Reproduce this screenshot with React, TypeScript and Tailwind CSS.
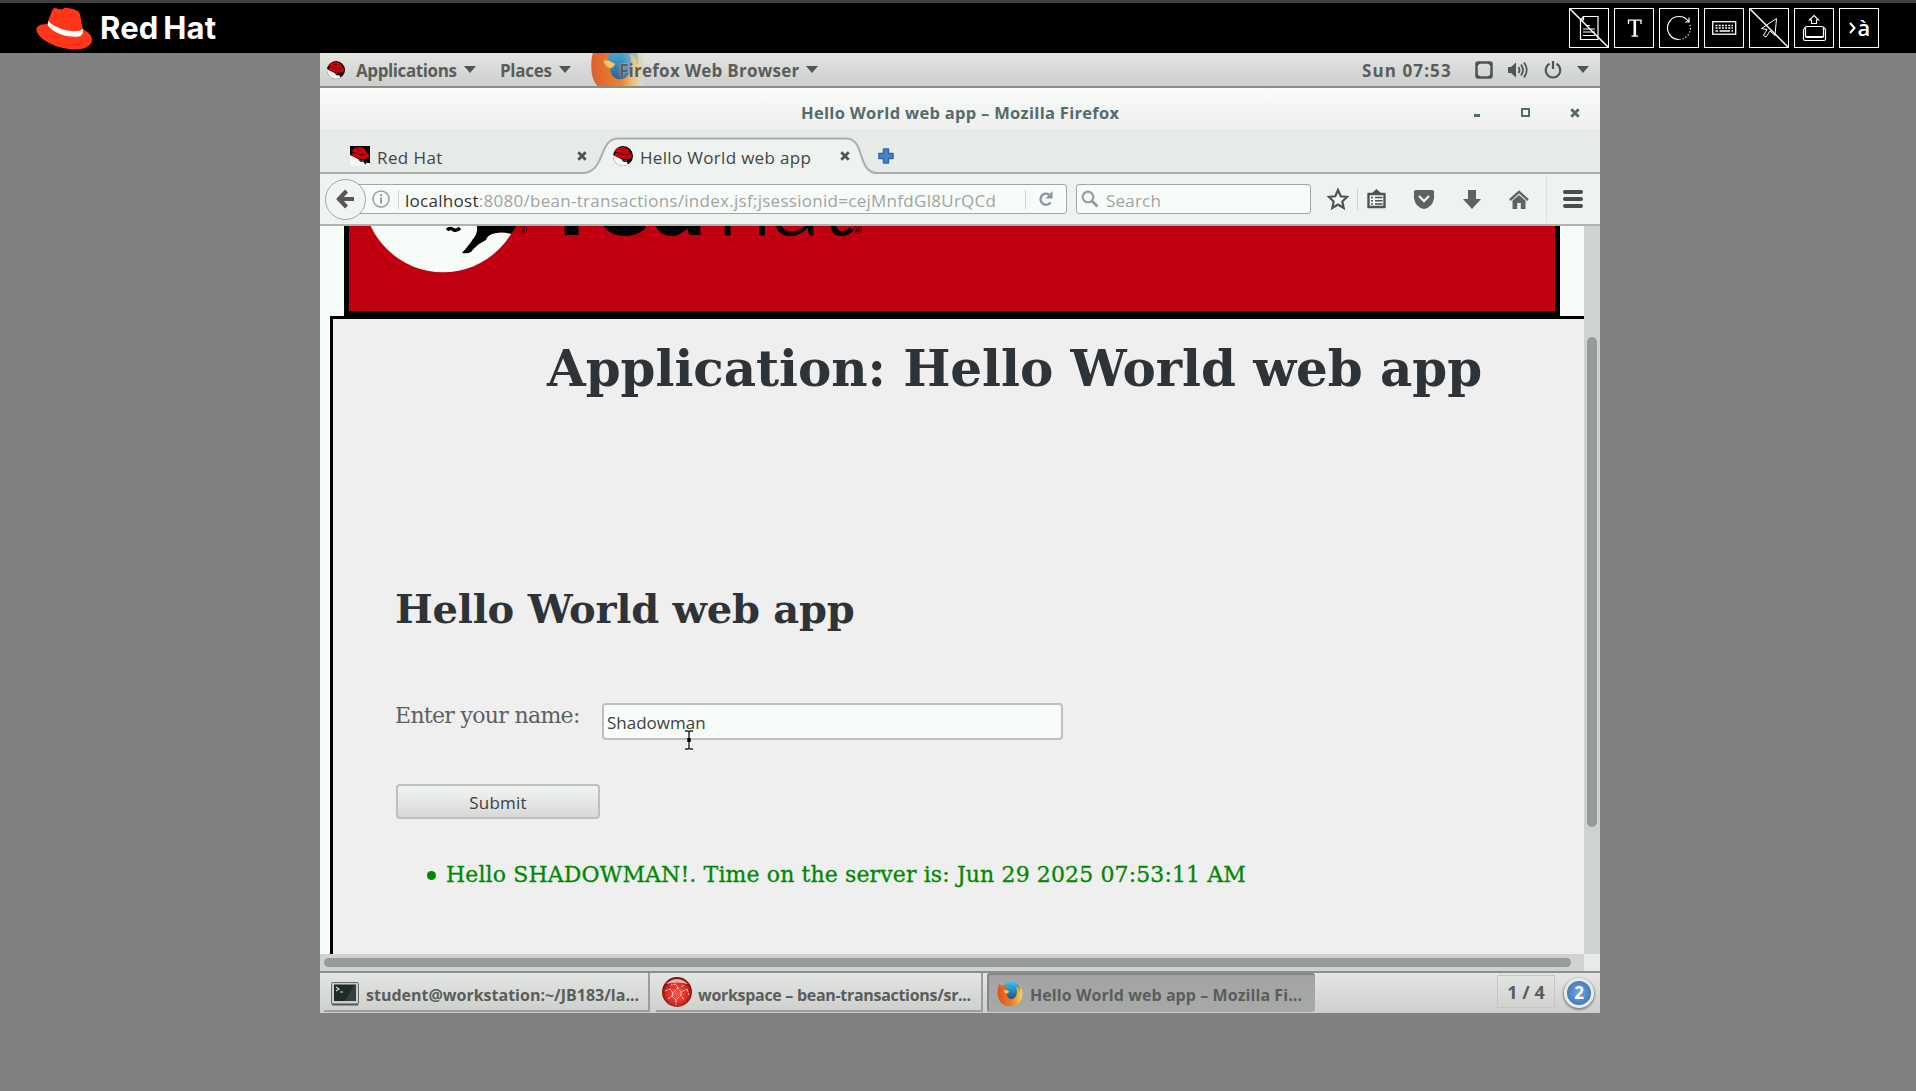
import React from "react";

const RedHatLogo = () => (
  <svg width="58" height="44" viewBox="0 0 58 44" className="block shrink-0">
    <path d="M11 17C3 17 0 20 .4 23C2 32 18 41 37 42.500C50 43 56 38 56 33C56 28 52 25 47 22Z" fill="#ff3617" />
    <path d="M12 14L16 4Q17 0 21 1.500L26 2.500L29 .5Q36 1 42 4L44 7L47 23Q44 30 32 28Q18 26 12 19Z" fill="#ff3617" />
    <path d="M12.500 14Q11 16 12 18.500C17 26 31 31 43 29.500Q47.500 28.500 47 22Q42 25.500 31 23.500Q17 20 12.500 14Z" fill="#fff" />
  </svg>
);

const Shadowman = ({ size, round = false }: { size: number; round?: boolean }) => (
  <svg width={size} height={size} viewBox="0 0 20 20" className={round ? "block shrink-0 rounded-full" : "block shrink-0"}>
    <rect width="20" height="20" fill="#000" />
    <path d="M0 9L4 11Q8 13 10 14L16 15L17 17L20 17V20H0Z" fill="#f4f7f4" />
    <path d="M2 5Q4 1 7 1.500Q12 0 15 3L17 7Q20 9 18.500 12Q15 14 9 12.500Q3 11 1 8L4 7Z" fill="#d00010" />
    <path d="M4 6.500Q10 10 16 8.500M7 3Q9 5.500 12 4" stroke="#500" strokeWidth="1" fill="none" />
    <path d="M8 13.500Q12 15 17 14L16 18.500L14.500 17.500L13.500 15.500L11 16Z" fill="#000" />
  </svg>
);

const Firefox = ({ size, id }: { size: number; id: string }) => (
  <svg width={size} height={size} viewBox="0 0 32 32" className="block shrink-0">
    <defs>
      <linearGradient id={id + "b"} x1="0" y1="0" x2="0" y2="1">
        <stop offset="0" stopColor="#3cc0ee" />
        <stop offset="1" stopColor="#14387c" />
      </linearGradient>
      <linearGradient id={id + "o"} x1="0" y1="0" x2="1" y2="0">
        <stop offset="0" stopColor="#e0521c" />
        <stop offset=".6" stopColor="#ee7f22" />
        <stop offset="1" stopColor="#fbd94a" />
      </linearGradient>
    </defs>
    <circle cx="17" cy="14" r="13" fill={"url(#" + id + "b)"} />
    <path d="M3 3Q4 7 7 6Q10 5 12 7Q10 9 11 11L15 13Q14 15 12 15.500Q12 21 17 22Q24 22 24.500 14Q25 10 23 7Q28 8 28 14Q29 9 27 5Q32 10 31 18Q29 30 17 31Q3 31 1 18Q0 9 3 3Z" fill={"url(#" + id + "o)"} />
    <path d="M11 11L15 13Q14 15 12 15.500Q9 15 8 11Z" fill="#f9c35a" />
  </svg>
);

const Caret = ({ className }: { className: string }) => (
  <svg width="12" height="7" viewBox="0 0 12 7" className={"block shrink-0 " + className}>
    <path d="M0 0H12L6 7Z" fill="#505452" />
  </svg>
);

const Cross = ({ color, className = "" }: { color: string; className?: string }) => (
  <svg width="10" height="10" viewBox="0 0 10 10" className={"block shrink-0 " + className}>
    <path d="M1.300 1.300L8.700 8.700M8.700 1.300L1.300 8.700" stroke={color} strokeWidth="2.800" />
  </svg>
);

const ToolButton = ({ slashed = false, children }: { slashed?: boolean; children: React.ReactNode }) => (
  <div className="h-10 w-10 shrink-0 border border-white">
    <svg width="38" height="38" viewBox="1 1 38 38" fill="none" stroke="#fff" className="block">
      {children}
      {slashed && <path d="M0 0L40 40" strokeWidth="1.500" />}
    </svg>
  </div>
);

const Toolbar = () => (
  <div className="flex gap-[5px]">
    <ToolButton slashed>
      <path d="M14.500 8.500H29V31.500H11.500V12Z" strokeWidth="1.200" />
      <path d="M14.500 8.500V12H11.500M17 17.500H21M14 21H26M14 24H26M14 27.500H26" strokeWidth="1.200" />
    </ToolButton>
    <ToolButton>
      <path d="M14.500 16V12.200H27V16M20.800 12V28M17.500 28.200H24" strokeWidth="1.300" />
      <path d="M20.800 12V28" strokeWidth="2.600" />
    </ToolButton>
    <ToolButton>
      <path d="M29.500 13.500A11.500 11.500 0 1 0 20 31.500M30 9.500V14H26" strokeWidth="1.200" />
      <path d="M31 17A11.500 11.500 0 0 1 20 31.500" strokeWidth="1.200" strokeDasharray="1.200 2" />
    </ToolButton>
    <ToolButton>
      <rect x="8.700" y="13.700" width="23" height="12.500" strokeWidth="1.300" />
      <path d="M11.500 17.500H29M11.500 20H29" strokeWidth="1.300" strokeDasharray="2 1.200" />
      <path d="M11.500 23H14M15.500 23H26M27.500 23H29" strokeWidth="1.300" />
    </ToolButton>
    <ToolButton slashed>
      <path d="M27.500 10.500L12.500 20.500L18 21.500L14.500 27.500L17 29L21 23L26 27.500Z" strokeWidth="1" />
    </ToolButton>
    <ToolButton>
      <path d="M20 7.500L24.500 12H22.500V15.500H17.500V12H15.500Z" strokeWidth="1.100" />
      <rect x="11.500" y="18.500" width="18" height="11" rx="1.500" strokeWidth="1.200" />
      <path d="M11.500 28.500H29.500M9.500 21.500V31Q9.500 32.500 11 32.500H30Q31.500 32.500 31.500 31V21.500L29.500 19M9.500 21.500L11.500 19" strokeWidth="1.200" />
    </ToolButton>
    <div className="flex h-10 w-10 items-center justify-center border border-white font-['Open_Sans',sans-serif] text-[22px] font-semibold tracking-[-1px] text-white">
      <svg width="7" height="12" viewBox="0 0 7 12" className="mr-[2px] block" fill="none" stroke="#fff" strokeWidth="2">
        <path d="M1 1L5.500 6L1 11" />
      </svg>
      <span className="pb-0.5">à</span>
    </div>
  </div>
);

const GnomeBar = () => (
  <div className="flex h-[35px] shrink-0 items-center border-b-2 border-[#8a8d8a] bg-linear-to-b from-[#e2e5e2] to-[#cccfcc] text-[17px] font-bold text-[#5a5d5b]">
    <div className="ml-[7px]"><Shadowman size={18} round /></div>
    <span className="ml-[11px] mt-0.5 w-[102px] tracking-[-0.4px]">Applications</span>
    <Caret className="ml-[6px]" />
    <span className="ml-[24px] mt-0.5 w-[52px] tracking-[-0.3px]">Places</span>
    <Caret className="ml-[7px]" />
    <div className="relative ml-[19px] h-[33px] w-[54px] shrink-0 overflow-hidden">
      <div className="absolute -top-[11px] left-0 opacity-90"><Firefox size={54} id="fa" /></div>
      <div className="absolute inset-0 bg-linear-to-r from-transparent from-60% to-[#d6d9d6]/80" />
    </div>
    <span className="relative -ml-[25px] mt-0.5 w-[180px] tracking-[0.25px] [text-shadow:0_0_2px_#ddd]">Firefox Web Browser</span>
    <Caret className="ml-[7px]" />
    <span className="ml-auto mt-0.5 w-[90px] tracking-[1.1px]">Sun 07:53</span>
    <svg width="18" height="18" viewBox="0 0 18 18" className="ml-[23px] block shrink-0">
      <rect x="1.500" y="1.500" width="15" height="15" rx="1.500" fill="none" stroke="#505452" strokeWidth="2.500" />
      <path d="M2 2L5 2L2 5ZM16 2V5L13 2ZM2 16V13L5 16ZM16 16H13L16 13Z" fill="#505452" stroke="#505452" />
    </svg>
    <svg width="20" height="18" viewBox="0 0 20 18" className="ml-[15px] block shrink-0" fill="none" stroke="#505452" strokeWidth="1.800">
      <path d="M0 6H3L8 1.500V16.500L3 12H0Z" fill="#505452" stroke="none" />
      <path d="M10.500 6Q12.500 9 10.500 12M13 3.500Q17 9 13 14.500M16 1.500Q21.500 9 16 16.500" />
    </svg>
    <svg width="18" height="18" viewBox="0 0 18 18" className="ml-4 block shrink-0" fill="none" stroke="#505452" strokeWidth="2.200">
      <path d="M5.500 2.800A7.300 7.300 0 1 0 12.500 2.800M9 0V8" />
    </svg>
    <Caret className="ml-[15px] mr-[11px]" />
  </div>
);

const TitleBar = () => (
  <div className="flex h-[41px] shrink-0 items-center bg-linear-to-b from-[#f9fcf9] to-[#eeefee]">
    <span className="ml-[481px] mt-[9px] w-[324px] text-[16.500px] font-bold tracking-[0.3px] text-[#536b6b]">Hello World web app – Mozilla Firefox</span>
    <span className="ml-auto mt-[14px] block h-[3px] w-[6px] bg-[#536b6b]" />
    <span className="ml-[41px] mt-2 block h-[9px] w-[9px] border-[2.500px] border-[#536b6b]" />
    <Cross color="#536b6b" className="mt-2 ml-10 mr-[20px]" />
  </div>
);

const TabStrip = () => (
  <div className="relative flex h-[45px] shrink-0 items-center border-b-2 border-[#a9aeab] bg-[#e7ebe8] pt-[11px] text-[17px] text-[#414544]">
    <svg width="300" height="37" viewBox="0 0 300 37" className="absolute left-[262px] top-[8px]">
      <path d="M0 37C24 37 16 1.500 36 1.500H264C284 1.500 276 37 294 37Z" fill="#eff3f0" />
      <path d="M0 36C24 36 16 1.500 36 1.500H264C284 1.500 274 36 296 36" fill="none" stroke="#a9aeb3" strokeWidth="2" />
    </svg>
    <div className="ml-[30px]"><Shadowman size={20} /></div>
    <span className="ml-[7px] mt-[3px] w-[200px] tracking-[0.4px]">Red Hat</span>
    <Cross color="#505452" />
    <div className="relative ml-[26px]"><Shadowman size={20} round /></div>
    <span className="relative ml-[7px] mt-[3px] w-[200px] tracking-[0.32px]">Hello World web app</span>
    <Cross color="#505452" className="relative" />
    <svg width="16" height="16" viewBox="0 0 16 16" className="relative ml-[28px] block">
      <path d="M5.500 1H10.500V5.500H15V10.500H10.500V15H5.500V10.500H1V5.500H5.500Z" fill="#4a85c4" stroke="#2f66a8" strokeWidth="1.500" strokeLinejoin="round" />
    </svg>
  </div>
);

const NavBar = () => (
  <div className="flex h-[52px] shrink-0 items-center border-b-2 border-[#b0b4b1] bg-[#eff3f0] text-[17px]">
    <div className="relative z-10 ml-[5px] flex h-[41px] w-[41px] shrink-0 items-center justify-center rounded-full border-[1.500px] border-[#a3a6a3] bg-[#f1f4f1]">
      <svg width="19" height="20" viewBox="0 0 19 20" fill="none" stroke="#555856" strokeWidth="4.200">
        <path d="M10.500 2L3 10L10.500 18M3 10H18" />
      </svg>
    </div>
    <div className="-ml-3 flex h-[30px] w-[713px] shrink-0 items-center rounded-r-[3px] border-[1.500px] border-[#a3a8a4] bg-[#f8fcf9]">
      <svg width="18" height="18" viewBox="0 0 18 18" className="ml-[17px] block shrink-0" fill="none" stroke="#9a9d9b">
        <circle cx="9" cy="9" r="8" strokeWidth="1.500" />
        <path d="M9 7.500V13.500M9 4V6" strokeWidth="2" />
      </svg>
      <span className="ml-2 h-[19px] w-px bg-[#cfd2d0]" />
      <span className="ml-1.5 mt-[3px] w-[594px] shrink-0 whitespace-nowrap tracking-[0.28px] text-[#a0a3a1]">
        <span className="text-[#303433]">localhost</span>:8080/bean-transactions/index.jsf;jsessionid=cejMnfdGl8UrQCd
      </span>
      <span className="ml-[26px] h-[19px] w-px bg-[#cfd2d0]" />
      <svg width="16" height="16" viewBox="0 0 16 16" className="ml-3 block shrink-0" fill="none" stroke="#8797a6" strokeWidth="2.500">
        <path d="M11 3.500A5.500 5.500 0 1 0 12.500 11.500" />
        <path d="M14.500 0V7.500H7.500Z" fill="#8797a6" stroke="none" />
      </svg>
    </div>
    <div className="ml-[9px] flex h-[30px] w-[235px] shrink-0 items-center rounded-[3px] border-[1.500px] border-[#a3a8a4] bg-[#f8fcf9] text-[#a0a3a1]">
      <svg width="18" height="18" viewBox="0 0 18 18" className="ml-1 block shrink-0" fill="none" stroke="#999c9a">
        <circle cx="7" cy="7" r="5.300" strokeWidth="2.200" />
        <path d="M11 11L16.500 16.500" strokeWidth="3" />
      </svg>
      <span className="ml-[7px] mt-[3px] tracking-[0.2px]">Search</span>
    </div>
    <svg width="22" height="22" viewBox="0 0 22 22" className="ml-4 block shrink-0">
      <path d="M11 2L13.700 8.300L20 9L15.300 13.500L16.700 20L11 16.500L5.300 20L6.700 13.500L2 9L8.300 8.300Z" fill="#f5f8f5" stroke="#505351" strokeWidth="2.200" />
    </svg>
    <span className="ml-2 h-[22px] w-px shrink-0 bg-[#cfd2d0]" />
    <svg width="19" height="20" viewBox="0 0 19 20" className="ml-[9px] block shrink-0">
      <path d="M1.500 5H17.500V18H1.500Z" fill="#f3f6f3" stroke="#505351" strokeWidth="2.400" strokeLinejoin="round" />
      <path d="M4 5L9.500 0L15 5Z" fill="#505351" />
      <path d="M4 8.500H6M8 8.500H15.500M4 11.800H6M8 11.800H15.500M4 15H6M8 15H15.500" stroke="#505351" strokeWidth="1.500" />
    </svg>
    <svg width="20" height="19" viewBox="0 0 20 19" className="ml-[28px] block shrink-0">
      <path d="M0 1.500Q0 0 1.500 0H18.500Q20 0 20 1.500V8Q19 17 10 19Q1 17 0 8Z" fill="#5f6260" />
      <path d="M5 6L10 11L15 6" fill="none" stroke="#f3f6f3" strokeWidth="2.400" />
    </svg>
    <svg width="18" height="19" viewBox="0 0 18 19" className="ml-[29px] block shrink-0">
      <path d="M5 0H13V9H18L9 19L0 9H5Z" fill="#5f6260" />
    </svg>
    <svg width="20" height="19" viewBox="0 0 20 19" className="ml-7 block shrink-0">
      <path d="M1 10L10 1.800L19 10" fill="none" stroke="#5f6260" strokeWidth="2.400" />
      <path d="M3.500 10.500L10 5L16.500 10.500V19H11.800V13H8.200V19H3.500Z" fill="#5f6260" />
    </svg>
    <span className="ml-[17px] h-12 w-px shrink-0 bg-[#dde1de]" />
    <div className="ml-4 flex w-5 shrink-0 flex-col gap-[3px]">
      <span className="h-1 rounded-sm bg-[#4a4d4b]" />
      <span className="h-1 rounded-sm bg-[#4a4d4b]" />
      <span className="h-1 rounded-sm bg-[#4a4d4b]" />
    </div>
  </div>
);

const Banner = () => (
  <div className="ml-6 flex h-[90px] w-[1216px] overflow-hidden border-x-[5px] border-b-[5px] border-black bg-[#c00010]">
    <svg width="167" height="85" viewBox="0 0 167 85" className="block shrink-0">
      <circle cx="94" cy="-33.500" r="79.700" fill="#f8fcf8" />
      <path d="M128 0H168L162 8Q152 5 143 8Q138 10 137 14L130 18Q124 23 122 26Q119 28 113 27Q121 18 124 13Q129 8 128 0Z" fill="#000" />
      <path d="M98 4Q101 1 105 4Q108 5 111 2" fill="none" stroke="#000" strokeWidth="3.500" />
    </svg>
    <div className="relative -mt-[88px] h-[100px] whitespace-nowrap font-['Lato',sans-serif] text-[100px] leading-[116px] text-black">
      <span className="absolute left-[2px] top-[43px] mt-[43px] text-[11px] leading-none">®</span>
      <span className="ml-[43px] inline-block w-[158px] font-black">red</span>
      <span className="inline-block w-[132px] font-light [-webkit-text-stroke:1px_black]">hat</span>
      <span className="absolute left-[337px] top-[43px] mt-[43px] text-[11px] leading-none">®</span>
    </div>
  </div>
);

const TextCursor = () => (
  <svg width="12" height="22" viewBox="0 0 12 22" className="absolute left-[79px] top-[24px]">
    <path d="M2 2H5L6 3L7 2H10M6 3V19M2 20H5L6 19L7 20H10" fill="none" stroke="#fff" strokeWidth="4" />
    <path d="M2 2H5L6 3L7 2H10M6 3V19M2 20H5L6 19L7 20H10" fill="none" stroke="#222" strokeWidth="1.400" />
    <path d="M6 9V13" stroke="#000" strokeWidth="3.500" />
  </svg>
);

const Page = () => (
  <div className="h-[728px] w-[1264px] overflow-hidden bg-[#f8fcf8]">
    <Banner />
    <div className="ml-[10px] h-[640px] border-l-[3px] border-t-[3px] border-black bg-[#efefef] font-['DejaVu_Serif',serif] text-[#2e3337]">
      <h1 className="ml-[214px] mt-[20px] w-[1000px] whitespace-nowrap text-[50px] font-bold leading-[60px] tracking-[-0.080px]">Application: Hello World web app</h1>
      <h2 className="ml-[62px] mt-[185px] whitespace-nowrap text-[40px] font-bold leading-[50px] tracking-[-0.260px]">Hello World web app</h2>
      <div className="ml-[62px] mt-[69px] flex">
        <span className="w-[207px] whitespace-nowrap text-[22px] leading-[26px] tracking-[-0.680px] text-[#5c6062]">Enter your name:</span>
        <div className="relative h-[37px] w-[461px] rounded-[4px] border-2 border-[#bcc1bd] bg-[#f8fcf8] pl-[3px] pt-1.5 font-['Open_Sans',sans-serif] text-[17px] leading-[24px] text-[#3c4042]">
          Shadowman
          <TextCursor />
        </div>
      </div>
      <div className="ml-[63px] mt-[44px] flex h-[35px] w-[204px] items-center justify-center rounded-[4px] border-2 border-[#bcc1bd] bg-linear-to-b from-[#f3f5f3] to-[#d6d9d6] pt-0.5 font-['Open_Sans',sans-serif] text-[17px] tracking-[0.2px] text-[#3c4042]">
        Submit
      </div>
      <div className="ml-[94px] mt-[42px] flex items-center whitespace-nowrap text-[22px] leading-[28px] tracking-[0.120px] text-[#008800] [-webkit-text-stroke:0.3px_#008800]">
        <span className="mr-[10px] h-[9px] w-[9px] rounded-full bg-[#008800]" />
        Hello SHADOWMAN!. Time on the server is: Jun 29 2025 07:53:11 AM
      </div>
    </div>
  </div>
);

const TaskBar = () => (
  <div className="flex h-[42px] shrink-0 items-start border-t-2 border-[#8c908d] bg-linear-to-b from-[#e3e6e3] to-[#cccfcc] text-[16px] font-bold text-[#5a5d5b]">
    <div className="ml-1 flex h-[39px] w-[326px] items-center border-b-2 border-r-2 border-[#9a9d9a] pl-[7px]">
      <svg width="28" height="24" viewBox="0 0 28 24" className="mt-1 block shrink-0">
        <rect x=".5" y=".5" width="27" height="22" rx="1" fill="#c9ccc9" stroke="#686b69" />
        <rect x="3" y="2.500" width="22" height="16.500" fill="#1f2a29" />
        <path d="M5 5L8 7L5 9M9 10H12" stroke="#cdd" fill="none" strokeWidth="1.200" />
        <path d="M14 19L23 3H25V19Z" fill="#34403e" />
        <path d="M1 22.500H27" stroke="#555" strokeWidth="2" />
      </svg>
      <span className="ml-[7px] mt-[7px] w-[272px] whitespace-nowrap">student@workstation:~/JB183/la...</span>
    </div>
    <div className="ml-[6px] flex h-[39px] w-[327px] items-center border-b-2 border-r-2 border-[#9a9d9a] pl-[6px]">
      <svg width="30" height="30" viewBox="0 0 30 30" className="block shrink-0">
        <defs>
          <radialGradient id="ball" cx=".5" cy=".55" r=".5">
            <stop offset="0" stopColor="#ff5548" />
            <stop offset=".7" stopColor="#d62e26" />
            <stop offset="1" stopColor="#8c0f0f" />
          </radialGradient>
        </defs>
        <circle cx="15" cy="15" r="15" fill="url(#ball)" />
        <path d="M4 7Q15 -3 26 7Q15 4 4 7Z" fill="#fff" opacity=".65" />
        <path d="M3 14L8 12L11 16L16 11L19 15L25 12M6 22L10 19L14 23L19 18L22 23M11 16L10 19M19 15V18M16 11L14 7L9 8M25 12L27 18M14 23V28M22 8L19 10" stroke="#ffc9c2" strokeWidth="1" fill="none" strokeDasharray="3 1" />
      </svg>
      <span className="ml-[6px] mt-[7px] w-[273px] whitespace-nowrap tracking-[-0.3px]">workspace – bean-transactions/sr...</span>
    </div>
    <div className="ml-[4px] flex h-[39px] w-[328px] items-center rounded-[3px] border-l-2 border-t-2 border-[#838784] bg-linear-to-b from-[#a3a3a3] to-[#a6aaa7] pl-2">
      <Firefox size={26} id="fb" />
      <span className="ml-[7px] mt-[3px] w-[274px] whitespace-nowrap tracking-[0.07px]">Hello World web app – Mozilla Fi...</span>
    </div>
    <div className="ml-auto mt-[2px] flex h-[33px] w-[58px] items-center justify-center border border-[#c2c5c2] pt-0.5 text-[18px]">1 / 4</div>
    <div className="mr-[6px] ml-[9px] mt-[5px] flex h-[30px] w-[30px] items-center justify-center rounded-full border-[3px] border-[#e6e9e8] bg-radial from-[#74a8e0] to-[#2f68ad] text-[17px] text-white shadow-[0_1px_2px_1px_#888]">2</div>
  </div>
);

export default function App() {
  return (
    <div className="flex h-[1091px] w-[1916px] flex-col overflow-hidden bg-[#808080]">
      <header className="flex h-[53px] shrink-0 items-start border-t-[3px] border-[#404040] bg-black">
        <div className="ml-9 mt-1"><RedHatLogo /></div>
        <span className="ml-[6px] mt-[5px] font-['Inter',sans-serif] text-[31px] font-bold leading-[40px] tracking-[0.2px] [word-spacing:-3px] text-white">Red Hat</span>
        <div className="ml-auto mt-[5px] mr-[37px]"><Toolbar /></div>
      </header>
      <main className="ml-[320px] flex h-[960px] w-[1280px] shrink-0 flex-col overflow-hidden bg-[#e7ebe8] font-['Open_Sans',sans-serif] whitespace-nowrap">
        <GnomeBar />
        <TitleBar />
        <TabStrip />
        <NavBar />
        <div className="flex h-[728px] shrink-0">
          <Page />
          <div className="w-4 bg-[#ced3cf] pt-[111px] pl-[3px]">
            <div className="h-[490px] w-[10px] rounded-full bg-[#979c98]" />
          </div>
        </div>
        <div className="flex h-[17px] shrink-0">
          <div className="w-[1264px] bg-[#ced3cf] pt-1 pl-1">
            <div className="h-[9px] w-[1247px] rounded-full bg-[#979c98]" />
          </div>
        </div>
        <TaskBar />
      </main>
    </div>
  );
}
